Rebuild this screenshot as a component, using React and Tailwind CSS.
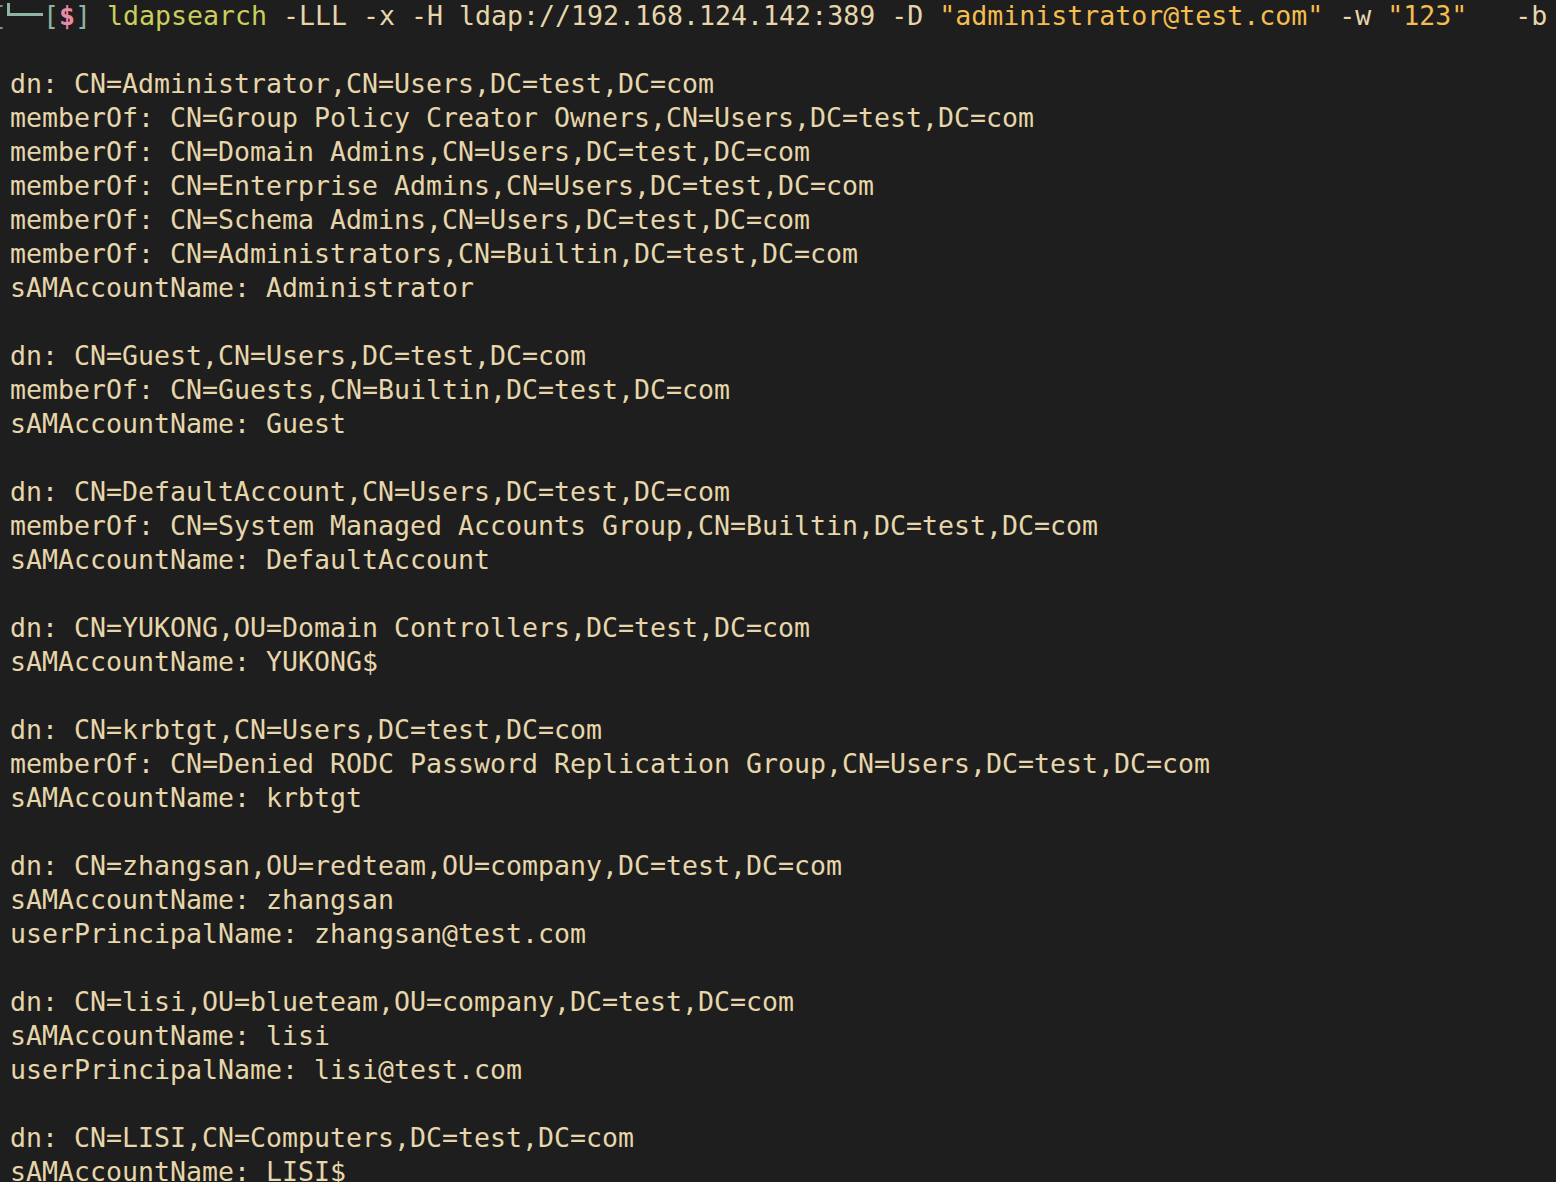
import React from "react";

const blocks = [
  [
    "dn: CN=Administrator,CN=Users,DC=test,DC=com",
    "memberOf: CN=Group Policy Creator Owners,CN=Users,DC=test,DC=com",
    "memberOf: CN=Domain Admins,CN=Users,DC=test,DC=com",
    "memberOf: CN=Enterprise Admins,CN=Users,DC=test,DC=com",
    "memberOf: CN=Schema Admins,CN=Users,DC=test,DC=com",
    "memberOf: CN=Administrators,CN=Builtin,DC=test,DC=com",
    "sAMAccountName: Administrator",
  ],
  [
    "dn: CN=Guest,CN=Users,DC=test,DC=com",
    "memberOf: CN=Guests,CN=Builtin,DC=test,DC=com",
    "sAMAccountName: Guest",
  ],
  [
    "dn: CN=DefaultAccount,CN=Users,DC=test,DC=com",
    "memberOf: CN=System Managed Accounts Group,CN=Builtin,DC=test,DC=com",
    "sAMAccountName: DefaultAccount",
  ],
  [
    "dn: CN=YUKONG,OU=Domain Controllers,DC=test,DC=com",
    "sAMAccountName: YUKONG$",
  ],
  [
    "dn: CN=krbtgt,CN=Users,DC=test,DC=com",
    "memberOf: CN=Denied RODC Password Replication Group,CN=Users,DC=test,DC=com",
    "sAMAccountName: krbtgt",
  ],
  [
    "dn: CN=zhangsan,OU=redteam,OU=company,DC=test,DC=com",
    "sAMAccountName: zhangsan",
    "userPrincipalName: zhangsan@test.com",
  ],
  [
    "dn: CN=lisi,OU=blueteam,OU=company,DC=test,DC=com",
    "sAMAccountName: lisi",
    "userPrincipalName: lisi@test.com",
  ],
  [
    "dn: CN=LISI,CN=Computers,DC=test,DC=com",
    "sAMAccountName: LISI$",
  ],
];

export default function App() {
  return (
    <div
      className="h-screen w-full overflow-hidden bg-[#1e1e1e] text-[#e6d6ab] text-[26.58px] leading-[34px] whitespace-pre"
      style={{ fontFamily: '"DejaVu Sans Mono", "Liberation Mono", monospace' }}
    >
      <div className="h-[34px] -mt-[1px]">
        <span className="inline-block ml-[-9px] w-[16px] text-[#8a8a8a]">[</span>
        <span className="inline-block align-top mt-[4px] w-[36px] h-[13px] border-l-[3px] border-b-[3px] border-[#8db5a1]"></span>
        <span className="text-[#8db5a1]">[</span>
        <span className="text-[#ea8aa6] font-bold">$</span>
        <span className="text-[#8db5a1]">]</span>
        <span> </span>
        <span className="text-[#c9ce5c]">ldapsearch</span>
        <span> -LLL -x -H ldap://192.168.124.142:389 -D </span>
        <span className="text-[#f3bd4f]">"administrator@test.com"</span>
        <span> -w </span>
        <span className="text-[#f3bd4f]">"123"</span>
        <span>   -b</span>
      </div>
      <div className="pl-[10px]">
        {blocks.map((b, i) => (
          <div key={i} className="pt-[34px]">
            {b.map((l, j) => (
              <div key={j} className="h-[34px]">{l}</div>
            ))}
          </div>
        ))}
      </div>
    </div>
  );
}
